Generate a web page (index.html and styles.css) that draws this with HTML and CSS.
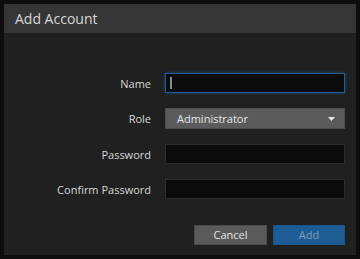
FILE: index.html
```html
<!DOCTYPE html>
<html lang="en">
  <head>
    <meta charset="UTF-8" />
    <meta name="viewport" content="width=device-width, initial-scale=1.0" />
    <title>Add Account</title>
    <link rel="stylesheet" href="styles.css">
  </head>
  <body>
    <div class="modal">
      <div class="modal-header">Add Account</div>
      <div class="modal-body">
        <div class="form">
          <label class="form-label">Name</label>
          <div class="field field-focus"><span class="caret"></span></div>
          <label class="form-label">Role</label>
          <div class="select">
            <span>Administrator</span>
            <svg class="select-arrow" width="7" height="4" viewBox="0 0 7 4"><path d="M0 0h7L3.5 4z" fill="#e6e6e6"/></svg>
          </div>
          <label class="form-label">Password</label>
          <div class="field"></div>
          <label class="form-label">Confirm Password</label>
          <div class="field"></div>
        </div>
        <div class="actions">
          <div class="btn cancel-btn">Cancel</div>
          <div class="btn add-btn">Add</div>
        </div>
      </div>
    </div>
  </body>
</html>
```

FILE: styles.css
```css
body {
  margin: 0;
  background-color: #0d0d0d;
  font-family: "Open Sans", "Liberation Sans", sans-serif;
}

.modal {
  margin: 4px;
  width: 352px;
  height: 251px;
  background-color: #202020;
  display: flex;
  flex-direction: column;
}

.modal-header {
  height: 29px;
  line-height: 29px;
  padding-left: 11px;
  background-color: #363636;
  color: #d6d6d6;
  font-size: 14px;
}

.modal-body {
  flex: 1;
  padding: 40px 11px 10px 0;
  display: flex;
  flex-direction: column;
}

.form {
  display: grid;
  grid-template-columns: 147px 180px;
  column-gap: 14px;
  row-gap: 15px;
  align-items: center;
}

.form-label {
  text-align: right;
  color: #d8d8d8;
  font-size: 11px;
}

.field {
  box-sizing: border-box;
  height: 20px;
  background-color: #0b0b0b;
  border: 1px solid #2c2c2c;
  display: flex;
  align-items: center;
  padding-left: 4px;
}

.field-focus {
  border-color: #1f5f99;
  box-shadow: 0 0 3px rgba(31, 95, 153, 0.7);
}

.caret {
  width: 2px;
  height: 12px;
  background-color: #8a8a8a;
}

.select {
  box-sizing: border-box;
  height: 21px;
  background-color: #5b5b5b;
  border: 1px solid #4c4c4c;
  color: #e6e6e6;
  font-size: 11px;
  display: flex;
  align-items: center;
  justify-content: space-between;
  padding: 0 9px 0 11px;
}

.actions {
  margin-top: auto;
  display: flex;
  justify-content: flex-end;
  gap: 6px;
}

.btn {
  box-sizing: border-box;
  width: 73px;
  height: 20px;
  line-height: 18px;
  text-align: center;
  font-size: 11px;
}

.cancel-btn {
  background-color: #5a5a5a;
  border: 1px solid #4a4a4a;
  color: #e4e4e4;
}

.add-btn {
  width: 72px;
  background-color: #1d5c94;
  border: 1px solid #1a5488;
  color: #7f9cb6;
}
```
